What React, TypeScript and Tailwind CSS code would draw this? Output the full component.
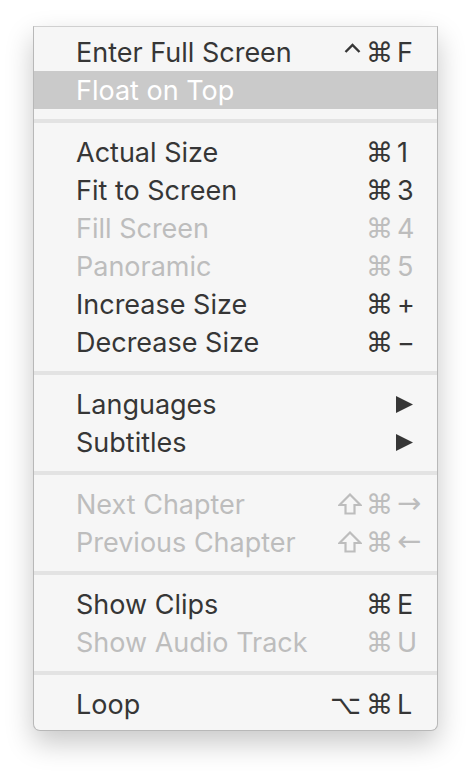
type Item = {
  label: string;
  mods?: string[];
  keyChar?: string;
  disabled?: boolean;
  active?: boolean;
  submenu?: boolean;
};

const groups: Item[][] = [
  [
    { label: 'Enter Full Screen', mods: ['ctrl', 'cmd'], keyChar: 'F' },
    { label: 'Float on Top', active: true },
  ],
  [
    { label: 'Actual Size', mods: ['cmd'], keyChar: '1' },
    { label: 'Fit to Screen', mods: ['cmd'], keyChar: '3' },
    { label: 'Fill Screen', mods: ['cmd'], keyChar: '4', disabled: true },
    { label: 'Panoramic', mods: ['cmd'], keyChar: '5', disabled: true },
    { label: 'Increase Size', mods: ['cmd'], keyChar: '+' },
    { label: 'Decrease Size', mods: ['cmd'], keyChar: '−' },
  ],
  [
    { label: 'Languages', submenu: true },
    { label: 'Subtitles', submenu: true },
  ],
  [
    { label: 'Next Chapter', mods: ['shift', 'cmd'], keyChar: '→', disabled: true },
    { label: 'Previous Chapter', mods: ['shift', 'cmd'], keyChar: '←', disabled: true },
  ],
  [
    { label: 'Show Clips', mods: ['cmd'], keyChar: 'E' },
    { label: 'Show Audio Track', mods: ['cmd'], keyChar: 'U', disabled: true },
  ],
  [{ label: 'Loop', mods: ['opt', 'cmd'], keyChar: 'L' }],
];

function Mod({ name }: { name: string }) {
  if (name === 'ctrl') {
    return (
      <svg width="17" height="18" viewBox="0 0 17 18" className="mr-[5px]">
        <polyline points="1.5,9 8.5,2 15.5,9" fill="none" stroke="currentColor" strokeWidth="2.4" />
      </svg>
    );
  }
  if (name === 'shift') {
    return (
      <svg width="24" height="22" viewBox="0 0 24 22" className="mr-[4px]">
        <path
          d="M12 1.5 L22.5 12 H16.5 V20.5 H7.5 V12 H1.5 Z"
          fill="none"
          stroke="currentColor"
          strokeWidth="2.2"
        />
      </svg>
    );
  }
  if (name === 'opt') {
    return <span className="mr-[5px] text-[27px] leading-none font-['DejaVu_Sans',sans-serif]">⌥</span>;
  }
  return <span className="text-[27px] leading-none font-['DejaVu_Sans',sans-serif]">⌘</span>;
}

function Row({ item }: { item: Item }) {
  const color = item.active
    ? 'text-white bg-[#cacaca]'
    : item.disabled
      ? 'text-[#bdbdbd]'
      : 'text-[#363636]';
  const isArrow = item.keyChar === '→' || item.keyChar === '←';
  return (
    <div className={`${color} flex items-center h-[38px] pl-[42px] pr-[19px] whitespace-nowrap`}>
      <span className="flex-1 min-w-0 text-[27px] leading-none">{item.label}</span>
      {item.submenu ? (
        <svg className="mr-[5px]" width="17" height="17" viewBox="0 0 17 17">
          <polygon points="0,0 17,8.5 0,17" fill="currentColor" />
        </svg>
      ) : (
        <>
          <span className="flex items-center justify-end w-[70px]">
            {item.mods?.map((m) => <Mod key={m} name={m} />)}
          </span>
          <span
            className={`w-[25px] pl-[4px] leading-none ${
              isArrow ? "text-[29px] font-['DejaVu_Sans',sans-serif] -mt-[2px]" : 'text-[27px]'
            }`}
          >
            {item.keyChar}
          </span>
        </>
      )}
    </div>
  );
}

export default function App() {
  return (
    <div className="min-h-screen bg-white pt-[26px] pl-[33px] font-['Inter',sans-serif]">
      <div className="w-[405px] bg-[#f6f6f6] border border-[#b8b8b8] border-t-[#d0d0d0] rounded-b-[7px] pt-[6px] pb-[7px] shadow-[0_12px_28px_rgba(0,0,0,0.22)]">
        {groups.map((group, gi) => (
          <div key={gi}>
            {gi > 0 && (
              <div className="h-[24px] pt-[10px]">
                <div className="h-[4px] bg-[#e3e3e3]" />
              </div>
            )}
            {group.map((item) => (
              <Row key={item.label} item={item} />
            ))}
          </div>
        ))}
      </div>
    </div>
  );
}
